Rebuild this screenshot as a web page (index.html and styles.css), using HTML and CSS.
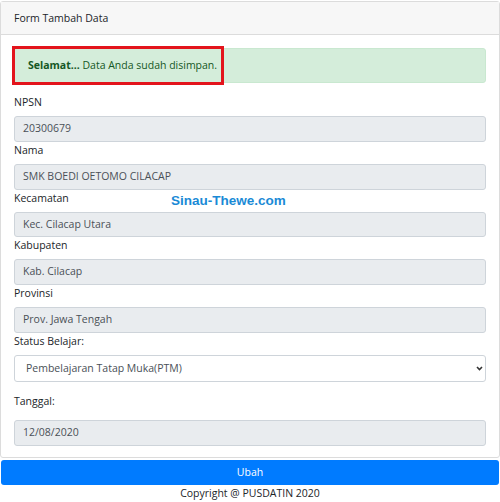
FILE: index.html
```html
<!DOCTYPE html>
<html>
<head>
<meta charset="utf-8">
<link rel="stylesheet" href="styles.css">
</head>
<body>
<div class="page">
  <div class="card">
    <div class="card-header">Form Tambah Data</div>
    <div class="card-body">
      <div class="alert"><b>Selamat...</b> Data Anda sudah disimpan.</div>
      <div class="mark"></div>
      <div class="watermark">Sinau-Thewe.com</div>
      <div class="group">
        <label>NPSN</label>
        <div class="input">20300679</div>
      </div>
      <div class="group">
        <label>Nama</label>
        <div class="input">SMK BOEDI OETOMO CILACAP</div>
      </div>
      <div class="group">
        <label>Kecamatan</label>
        <div class="input">Kec. Cilacap Utara</div>
      </div>
      <div class="group">
        <label>Kabupaten</label>
        <div class="input">Kab. Cilacap</div>
      </div>
      <div class="group">
        <label>Provinsi</label>
        <div class="input">Prov. Jawa Tengah</div>
      </div>
      <div class="group sel-group">
        <label>Status Belajar:</label>
        <div class="select">
          <span>Pembelajaran Tatap Muka(PTM)</span>
          <svg class="chev" width="7" height="5" viewBox="0 0 7 5"><path d="M1 1 L3.5 3.5 L6 1" fill="none" stroke="#333" stroke-width="1.6"/></svg>
        </div>
      </div>
      <div class="group">
        <label class="tgl">Tanggal:</label>
        <div class="input">12/08/2020</div>
      </div>
    </div>
  </div>
  <div class="btn">Ubah</div>
  <div class="copy">Copyright @ PUSDATIN 2020</div>
</div>
</body>
</html>
```
FILE: styles.css
```css
html, body {
  margin: 0;
  padding: 0;
  background: #fff;
}
body {
  font-family: "Open Sans", "Noto Sans", sans-serif;
  font-size: 10.5px;
  color: #212529;
}
.page {
  width: 500px;
  padding-top: 1px;
}
.card {
  border: 1px solid #dcdcdc;
  border-radius: 3px;
  background: #fff;
}
.card-header {
  height: 32px;
  line-height: 32px;
  padding: 0 13px;
  background: #f7f7f7;
  border-bottom: 1px solid #dcdcdc;
}
.card-body {
  position: relative;
  padding: 13px 13px 11px;
}
.alert {
  height: 33px;
  line-height: 33px;
  padding: 0 13px;
  background: #d4edda;
  border: 1px solid #c9e8d0;
  border-radius: 3px;
  color: #155724;
  margin-bottom: 11px;
}
.alert b {
  font-weight: 700;
}
.mark {
  position: absolute;
  left: 11px;
  top: 11px;
  width: 206px;
  height: 33px;
  border: 3px solid #e3141c;
}
.watermark {
  position: absolute;
  left: 170px;
  top: 157px;
  font-family: "Liberation Sans", Arial, sans-serif;
  font-weight: 700;
  font-size: 13.5px;
  color: #1a8ad6;
  line-height: 18px;
}
.group label {
  display: block;
  line-height: 16px;
  margin-bottom: 6px;
}
.input {
  box-sizing: border-box;
  height: 25.75px;
  line-height: 23.75px;
  padding: 0 8px;
  background: #e9ecef;
  border: 1px solid #ced4da;
  border-radius: 3px;
  color: #495057;
}
.sel-group {
  margin-bottom: 11px;
}
.select {
  box-sizing: border-box;
  height: 27px;
  padding: 0 11px;
  border: 1px solid #ced4da;
  border-radius: 3px;
  background: #fff;
  color: #495057;
  display: flex;
  align-items: center;
  justify-content: space-between;
}
.chev {
  margin-right: -9px;
}
.tgl {
  margin-bottom: 11px !important;
}
.btn {
  margin: 2px 1px 0 1px;
  height: 25.75px;
  line-height: 25.75px;
  background: #007bff;
  color: #fff;
  text-align: center;
  border-radius: 3px;
}
.copy {
  text-align: center;
  line-height: 17px;
}
```
